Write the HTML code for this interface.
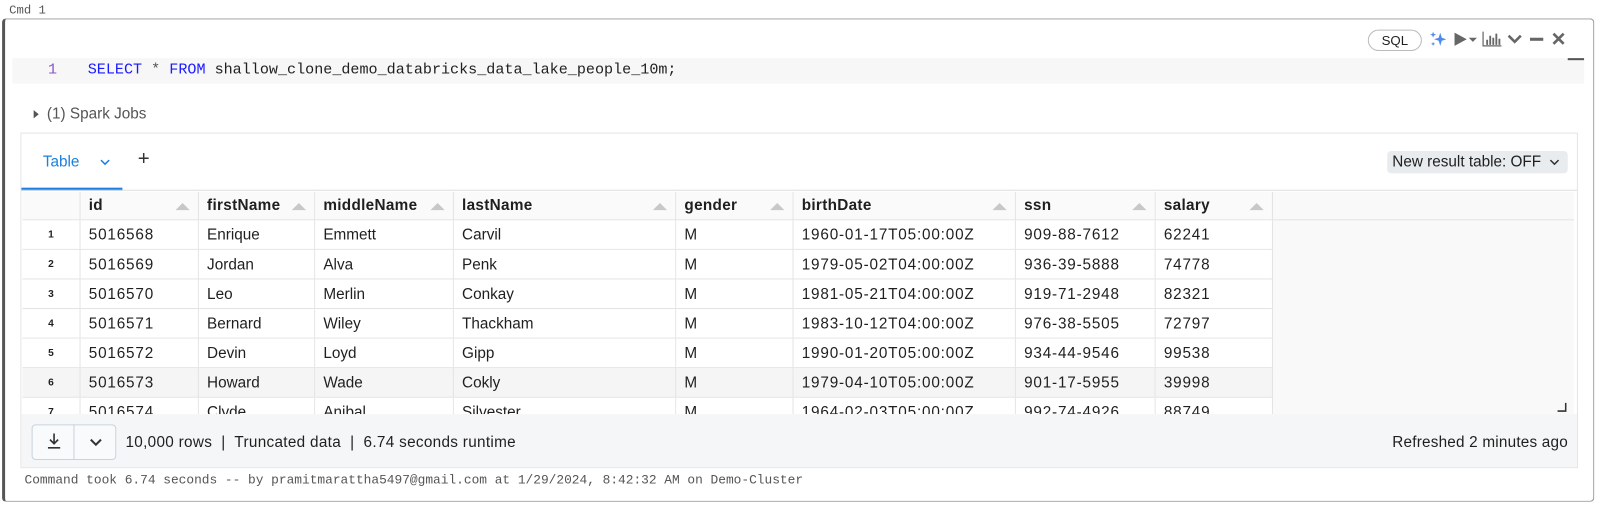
<!DOCTYPE html>
<html><head><meta charset="utf-8"><style>
*{box-sizing:border-box;margin:0;padding:0}
body{width:1600px;height:508px;background:#fff;font-family:"Liberation Sans",sans-serif;position:relative;overflow:hidden;color:#1f1f1f}
#w{position:absolute;left:0;top:0;width:1568px;height:498px;transform:scale(1.02);transform-origin:0 0}
.abs{position:absolute}
.mono{font-family:"Liberation Mono",monospace}
.cell{position:absolute;height:29px;line-height:29px;font-size:15px;padding-left:8px;border-right:1px solid #e3e3e3;border-bottom:1px solid #e3e3e3;background:#fff;white-space:nowrap;overflow:hidden}
.num{letter-spacing:0.8px}
.hd{font-weight:bold;background:#fafafa;letter-spacing:0.3px}
.rn{font-size:10px;font-weight:bold;text-align:center;padding:0;letter-spacing:0}
.tri{position:absolute;right:8px;top:11px;width:0;height:0;border-left:7px solid transparent;border-right:7px solid transparent;border-bottom:7px solid #c8c8c8}
</style></head><body><div id="w">
<div class="abs mono" style="left:9px;top:3px;font-size:12px;color:#555">Cmd 1</div>
<div class="abs" style="left:2px;top:18px;width:1561px;height:474px;border:1px solid #999;border-left:3px solid #555;border-radius:4px"></div>
<!-- toolbar -->
<div class="abs" style="left:1341px;top:29px;width:53px;height:21px;border:1px solid #bbb;border-radius:11px;font-size:13px;text-align:center;line-height:19px">SQL</div>
<svg class="abs" style="left:1401px;top:30px" width="20" height="18"><path d="M11 2 L12.5 7 L17 8.5 L12.5 10 L11 15 L9.5 10 L5 8.5 L9.5 7Z" fill="#4d8af0"/><path d="M4 1 L4.8 3.2 L7 4 L4.8 4.8 L4 7 L3.2 4.8 L1 4 L3.2 3.2Z" fill="#4d8af0"/><path d="M4 11 L4.6 12.4 L6 13 L4.6 13.6 L4 15 L3.4 13.6 L2 13 L3.4 12.4Z" fill="#4d8af0"/></svg>
<svg class="abs" style="left:1424px;top:31px" width="26" height="16"><path d="M2 1 L14 7.5 L2 14Z" fill="#666"/><path d="M16 6 L24 6 L20 10Z" fill="#666"/></svg>
<svg class="abs" style="left:1453px;top:30px" width="20" height="16"><path d="M1 1 V15 H19" stroke="#666" fill="none" stroke-width="1.2"/><path d="M5 9V14M8 5V14M11 7V14M14 3V14M17 8V14" stroke="#666" stroke-width="1.8"/></svg>
<svg class="abs" style="left:1477px;top:32px" width="16" height="12"><path d="M2 3 L8 9 L14 3" stroke="#666" stroke-width="2.5" fill="none"/></svg>
<div class="abs" style="left:1500px;top:37px;width:13px;height:3px;background:#666"></div>
<svg class="abs" style="left:1521px;top:31px" width="14" height="14"><path d="M2 2 L12 12 M12 2 L2 12" stroke="#666" stroke-width="2.6"/></svg>
<!-- editor -->
<div class="abs" style="left:12px;top:57px;width:1527px;height:25px;background:#f7f7f7"></div>
<div class="abs" style="left:1537px;top:57px;width:16px;height:25px;background:#f7f7f7;border-top:2px solid #555"></div>
<div class="abs mono" style="left:47px;top:61px;font-size:14.8px;color:#8a55c8">1</div>
<div class="abs mono" style="left:86px;top:61px;font-size:14.8px;white-space:pre"><span style="color:#1a1aff">SELECT</span> <span style="color:#555">*</span> <span style="color:#1a1aff">FROM</span> shallow_clone_demo_databricks_data_lake_people_10m;</div>
<div class="abs" style="left:33px;top:108px;width:0;height:0;border-top:4px solid transparent;border-bottom:4px solid transparent;border-left:5px solid #555"></div>
<div class="abs" style="left:46px;top:103px;font-size:15px;color:#555">(1) Spark Jobs</div>
<!-- result container -->
<div class="abs" style="left:20px;top:130px;width:1527px;height:329px;border:1px solid #e5e5e5"></div>
<div class="abs" style="left:42px;top:150px;font-size:15px;color:#1a7fe0">Table</div>
<svg class="abs" style="left:97px;top:154px" width="12" height="10"><path d="M2 3 L6 7 L10 3" stroke="#1a7fe0" stroke-width="1.5" fill="none"/></svg>
<div class="abs" style="left:135px;top:145px;font-size:20px;color:#333;font-weight:300">+</div>
<div class="abs" style="left:21px;top:184px;width:99px;height:3px;background:#1a7fe0"></div>
<div class="abs" style="left:21px;top:186px;width:1525px;height:1px;background:#ddd"></div>
<div class="abs" style="left:1360px;top:148px;width:177px;height:22px;background:#e9ecef;border-radius:4px;font-size:15px;line-height:22px;padding-left:5px;white-space:nowrap">New result table: OFF</div>
<svg class="abs" style="left:1519px;top:155px" width="10" height="8"><path d="M1 2 L5 6 L9 2" stroke="#333" stroke-width="1.5" fill="none"/></svg>
<div class="abs" style="left:22px;top:188px;width:1521px;height:218px;background:#f9f9f9;overflow:hidden">
<div id="g"></div>
</div>
<svg class="abs" style="left:1525px;top:393px" width="12" height="12"><path d="M2 10 H10 V2" stroke="#333" stroke-width="1.5" fill="none"/></svg>
<!-- footer -->
<div class="abs" style="left:21px;top:406px;width:1525px;height:52px;background:#f5f6f7"></div>
<div class="abs" style="left:31px;top:416px;width:83px;height:35px;border:1px solid #c9d3de;border-radius:4px;background:#f8fafc"></div>
<div class="abs" style="left:72px;top:416px;width:1px;height:35px;background:#c9d3de"></div>
<svg class="abs" style="left:44px;top:423px" width="18" height="20"><path d="M9 2 V12 M5 8 L9 12 L13 8" stroke="#333" stroke-width="1.6" fill="none"/><path d="M3 16 H15" stroke="#333" stroke-width="1.6"/></svg>
<svg class="abs" style="left:87px;top:429px" width="14" height="10"><path d="M2 2 L7 7 L12 2" stroke="#333" stroke-width="2" fill="none"/></svg>
<div class="abs" style="left:123px;top:425px;font-size:15px;letter-spacing:0.3px;white-space:nowrap">10,000 rows &nbsp;|&nbsp; Truncated data &nbsp;|&nbsp; 6.74 seconds runtime</div>
<div class="abs" style="left:1365px;top:425px;font-size:15px;letter-spacing:0.2px;white-space:nowrap">Refreshed 2 minutes ago</div>
<div class="abs mono" style="left:24px;top:464px;font-size:12.6px;color:#555;white-space:nowrap">Command took 6.74 seconds -- by pramitmarattha5497@gmail.com at 1/29/2024, 8:42:32 AM on Demo-Cluster</div>
</div>
<script>
const xs=[0,57,173,287,423,641,756,974,1111,1226];
const hd=["","id","firstName","middleName","lastName","gender","birthDate","ssn","salary"];
const numc=[1,6,7,8];
const rows=[
["5016568","Enrique","Emmett","Carvil","M","1960-01-17T05:00:00Z","909-88-7612","62241"],
["5016569","Jordan","Alva","Penk","M","1979-05-02T04:00:00Z","936-39-5888","74778"],
["5016570","Leo","Merlin","Conkay","M","1981-05-21T04:00:00Z","919-71-2948","82321"],
["5016571","Bernard","Wiley","Thackham","M","1983-10-12T04:00:00Z","976-38-5505","72797"],
["5016572","Devin","Loyd","Gipp","M","1990-01-20T05:00:00Z","934-44-9546","99538"],
["5016573","Howard","Wade","Cokly","M","1979-04-10T05:00:00Z","901-17-5955","39998"],
["5016574","Clyde","Anibal","Silvester","M","1964-02-03T05:00:00Z","992-74-4926","88749"]];
let h="";
for(let c=0;c<9;c++){h+=`<div class="cell hd" style="left:${xs[c]}px;top:0;width:${xs[c+1]-xs[c]}px;height:28px;line-height:28px">${hd[c]}${c?'<span class="tri"></span>':''}</div>`}
h+=`<div class="abs" style="left:${xs[9]}px;top:0;width:400px;height:28px;border-bottom:1px solid #e3e3e3"></div>`;
rows.forEach((r,i)=>{const y=28+i*29;const bg=i==5?"#f5f5f5":"#fff";
h+=`<div class="cell rn" style="left:0;top:${y}px;width:57px;background:${bg}">${i+1}</div>`;
for(let c=1;c<9;c++)h+=`<div class="cell${numc.includes(c)?' num':''}" style="left:${xs[c]}px;top:${y}px;width:${xs[c+1]-xs[c]}px;background:${bg}">${r[c-1]}</div>`});
document.getElementById("g").innerHTML=h;
</script>
</body></html>
